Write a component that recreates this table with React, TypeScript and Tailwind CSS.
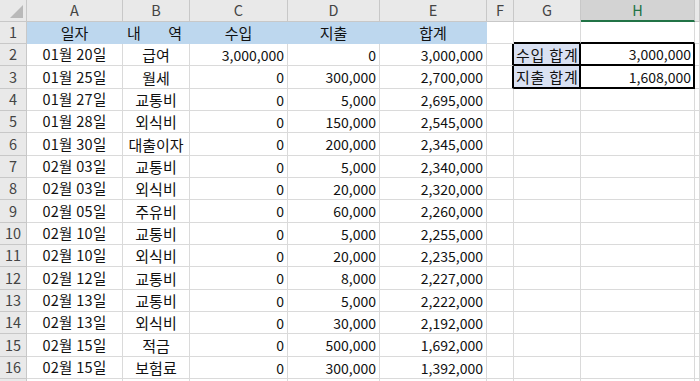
const FONT = "font-['Noto_Sans_CJK_KR','Noto_Sans',sans-serif]";

const COLS = ["A", "B", "C", "D", "E", "F", "G", "H", ""];

const ROWS: [string, string, string, string, string][] = [
    ["01월 20일", "급여", "3,000,000", "0", "3,000,000"],
    ["01월 25일", "월세", "0", "300,000", "2,700,000"],
    ["01월 27일", "교통비", "0", "5,000", "2,695,000"],
    ["01월 28일", "외식비", "0", "150,000", "2,545,000"],
    ["01월 30일", "대출이자", "0", "200,000", "2,345,000"],
    ["02월 03일", "교통비", "0", "5,000", "2,340,000"],
    ["02월 03일", "외식비", "0", "20,000", "2,320,000"],
    ["02월 05일", "주유비", "0", "60,000", "2,260,000"],
    ["02월 10일", "교통비", "0", "5,000", "2,255,000"],
    ["02월 10일", "외식비", "0", "20,000", "2,235,000"],
    ["02월 12일", "교통비", "0", "8,000", "2,227,000"],
    ["02월 13일", "교통비", "0", "5,000", "2,222,000"],
    ["02월 13일", "외식비", "0", "30,000", "2,192,000"],
    ["02월 15일", "적금", "0", "500,000", "1,692,000"],
    ["02월 15일", "보험료", "0", "300,000", "1,392,000"],
];

const SUMMARY: Record<number, [string, string]> = {
    2: ["수입 합계", "3,000,000"],
    3: ["지출 합계", "1,608,000"],
};

const COLS_TPL = "grid-cols-[27px_96px_67px_98px_92px_107px_27px_67px_114px_1fr]";
const grid = "border-r border-b border-[#dadada]";
const rowHead =
    "flex items-center justify-center bg-[#e9e9e9] border-r border-b border-[#c8c8c8] text-[14.5px] text-[#444]";

function heightFor(n: number) {
    return n % 3 === 0 ? "h-[23px]" : "h-[22px]";
}

function HeaderRow() {
    return (
        <div className={`grid h-[22px] ${COLS_TPL}`}>
            <div className="relative bg-[#e9e9e9] border-r border-b border-[#c8c8c8]">
                <svg className="absolute bottom-[3px] right-[3px]" width="13" height="13" viewBox="0 0 13 13">
                    <polygon points="13,0 13,13 0,13" fill="#b9b9b9" />
                </svg>
            </div>
            {COLS.map((c) =>
                c === "H" ? (
                    <div
                        key={c}
                        className="flex items-center justify-center bg-[#d3d3d3] border-r border-[#c8c8c8] border-b-2 border-b-[#217346] text-[14.5px] text-[#217346]"
                    >
                        {c}
                    </div>
                ) : (
                    <div
                        key={c || "I"}
                        className="flex items-center justify-center bg-[#e9e9e9] border-r border-b border-[#c8c8c8] text-[14.5px] text-[#444]"
                    >
                        {c}
                    </div>
                )
            )}
        </div>
    );
}

function TitleRow() {
    const blue = "flex items-center justify-center bg-[#bdd7ee] border-r border-b border-[#bdd7ee] text-[15px]";
    return (
        <div className={`grid h-[22px] ${COLS_TPL}`}>
            <div className={rowHead}>1</div>
            <div className={blue}>일자</div>
            <div className="flex items-center justify-between bg-[#bdd7ee] border-r border-b border-[#bdd7ee] pl-[4px] pr-[7px] text-[15px]">
                <span>내</span>
                <span>역</span>
            </div>
            <div className={blue}>수입</div>
            <div className={blue}>지출</div>
            <div className={blue}>합계</div>
            <div className={grid} />
            <div className="border-r border-[#dadada] border-b-2 border-b-black" />
            <div className="border-r border-[#dadada] border-b-2 border-b-black" />
            <div className={grid} />
        </div>
    );
}

function DataRow({ n, row }: { n: number; row?: [string, string, string, string, string] }) {
    const sum = SUMMARY[n];
    return (
        <div className={`grid ${heightFor(n)} ${COLS_TPL}`}>
            <div className={rowHead}>{row ? n : ""}</div>
            <div className={`${grid} flex items-center justify-center text-[14.5px] tracking-[0.3px]`}>{row?.[0]}</div>
            <div className={`${grid} flex items-center justify-center text-[15px]`}>{row?.[1]}</div>
            <div className={`${grid} flex items-center justify-end pr-[3px]`}>{row?.[2]}</div>
            <div className={`${grid} flex items-center justify-end pr-[3px]`}>{row?.[3]}</div>
            <div className={`${grid} flex items-center justify-end pr-[3px]`}>{row?.[4]}</div>
            {sum ? (
                <>
                    <div className="border-b border-[#dadada] border-r-2 border-r-black" />
                    <div className="flex items-center bg-[#d9e1f2] border-r-2 border-b-2 border-black pl-[2px] text-[15px] tracking-[0.8px]">
                        {sum[0]}
                    </div>
                    <div className="flex items-center justify-end border-r-2 border-b-2 border-black pr-[2px]">
                        {sum[1]}
                    </div>
                </>
            ) : (
                <>
                    <div className={grid} />
                    <div className={grid} />
                    <div className={grid} />
                </>
            )}
            <div className={grid} />
        </div>
    );
}

export default function App() {
    return (
        <div className={`h-[381px] w-[700px] overflow-hidden bg-white text-[14px] leading-none text-[#111] ${FONT}`}>
            <HeaderRow />
            <TitleRow />
            {ROWS.map((row, i) => (
                <DataRow key={i} n={i + 2} row={row} />
            ))}
            <DataRow n={17} />
        </div>
    );
}
